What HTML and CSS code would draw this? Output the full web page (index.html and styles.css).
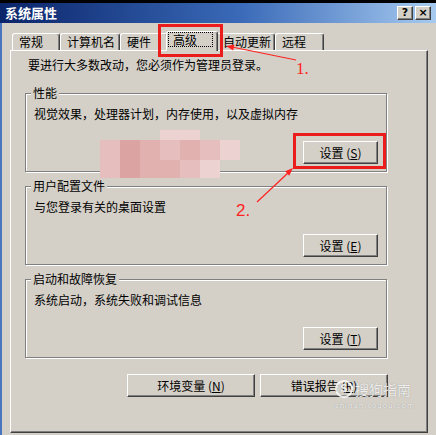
FILE: index.html
```html
<!DOCTYPE html>
<html lang="zh-CN">
  <head>
    <meta charset="UTF-8" />
    <meta name="viewport" content="width=device-width, initial-scale=1.0" />
    <title>系统属性</title>
    <link rel="stylesheet" href="styles.css">
  </head>
  <body>
    <div class="window">
      <div class="titlebar">
        <span class="title">系统属性</span>
        <div class="title-buttons">
          <span class="title-btn">?</span>
          <span class="title-btn">×</span>
        </div>
      </div>

      <div class="client">
        <div class="tabs">
          <div class="tab w-48">常规</div>
          <div class="tab w-60">计算机名</div>
          <div class="tab w-48">硬件</div>
          <div class="tab tab-active"><span class="focus">高级</span></div>
          <div class="tab w-59">自动更新</div>
          <div class="tab w-49">远程</div>
        </div>

        <div class="panel">
          <p class="note">要进行大多数改动，您必须作为管理员登录。</p>

          <div class="group">
            <span class="group-title">性能</span>
            <p class="group-text">视觉效果，处理器计划，内存使用，以及虚拟内存</p>
            <button class="btn">设置 (<u>S</u>)</button>
          </div>

          <div class="group">
            <span class="group-title">用户配置文件</span>
            <p class="group-text">与您登录有关的桌面设置</p>
            <button class="btn">设置 (<u>E</u>)</button>
          </div>

          <div class="group">
            <span class="group-title">启动和故障恢复</span>
            <p class="group-text">系统启动，系统失败和调试信息</p>
            <button class="btn">设置 (<u>T</u>)</button>
          </div>

          <div class="actions">
            <button class="btn btn-wide">环境变量 (<u>N</u>)</button>
            <button class="btn btn-wide">错误报告 (<u>R</u>)</button>
          </div>
        </div>
      </div>
    </div>

    <!-- annotations drawn over the screenshot -->
    <div class="blur">
      <i></i><i></i><i></i><i class="c1"></i><i class="c1"></i><i></i><i></i>
      <i class="c2"></i><i class="c4"></i><i class="c3"></i><i class="c2"></i><i class="c3"></i><i class="c2"></i><i class="c1"></i>
      <i class="c2"></i><i class="c4"></i><i class="c3"></i><i class="c3"></i><i class="c2"></i><i class="c1"></i><i></i>
    </div>

    <div class="mark mark-tab"></div>
    <div class="mark mark-btn"></div>
    <span class="step step-1">1.</span>
    <span class="step step-2">2.</span>

    <svg class="arrows" width="436" height="435" viewBox="0 0 436 435">
      <line x1="296" y1="60" x2="232" y2="47" stroke="#f22" stroke-width="1.2" />
      <polygon points="226,46 234.4,44.6 233.2,50.5" fill="#f22" />
      <line x1="257" y1="202" x2="288" y2="173" stroke="#f22" stroke-width="1.2" />
      <polygon points="293,168 289.2,175.7 285.1,171.3" fill="#f22" />
    </svg>

    <div class="watermark">
      <div class="wm-name"><span class="wm-logo">S</span>搜狗指南</div>
      <div class="wm-url">zhinan.sogou.com</div>
    </div>
  </body>
</html>
```

FILE: styles.css
```css
body {
  margin: 0;
  width: 436px;
  height: 435px;
  overflow: hidden;
  position: relative;
  background-color: #000;
  font-family: "Noto Sans CJK SC", "Liberation Sans", sans-serif;
  font-size: 12px;
  color: #000;
}

.window {
  margin-top: 3px;
  height: 432px;
  background-color: #d4d0c8;
}

/* title bar */
.titlebar {
  height: 20px;
  display: flex;
  align-items: center;
  justify-content: space-between;
  padding: 0 5px;
  background: linear-gradient(to right, #0a246a, #3a6ab8 55%, #a6caf0);
}
.title {
  color: #fff;
  font-weight: bold;
  font-size: 13px;
  line-height: 14px;
}
.title-buttons {
  display: flex;
  gap: 2px;
}
.title-btn {
  width: 16px;
  height: 14px;
  box-sizing: border-box;
  background-color: #d4d0c8;
  border: 1px solid;
  border-color: #fff #404040 #404040 #fff;
  box-shadow: inset -1px -1px #808080;
  font-family: "DejaVu Sans", sans-serif;
  font-weight: bold;
  font-size: 11px;
  line-height: 12px;
  text-align: center;
}

/* client area */
.client {
  border-left: 2px solid #4a76c0;
  padding: 8px 0 0 8px;
  height: 404px;
}

.tabs {
  display: flex;
  align-items: flex-end;
  height: 19px;
  padding-left: 2px;
}
.tab {
  box-sizing: border-box;
  height: 17px;
  padding-left: 6px;
  line-height: 15px;
  background-color: #d4d0c8;
  border-top: 1px solid #fff;
  border-left: 1px solid #fff;
  border-right: 1px solid #404040;
  box-shadow: inset -1px 0 #808080;
  border-radius: 3px 3px 0 0;
  white-space: nowrap;
}
.w-48 { width: 48px; }
.w-49 { width: 49px; }
.w-59 { width: 59px; }
.w-60 { width: 60px; }

.tab-active {
  position: relative;
  z-index: 1;
  width: 52px;
  height: 20px;
  margin: 0 -2px -1px;
  padding: 0 4px 0 1px;
}
.focus {
  display: block;
  height: 15px;
  box-sizing: border-box;
  border: 1px dotted #000;
  padding-left: 4px;
  line-height: 13px;
}

.panel {
  box-sizing: border-box;
  width: 418px;
  height: 383px;
  padding: 0 0 0 14px;
  border: 1px solid;
  border-color: #fff #404040 #404040 #fff;
  box-shadow: inset -1px -1px #808080;
}

.note {
  margin: 8px 0 0 3px;
  line-height: 12px;
}

/* group boxes */
.group {
  box-sizing: border-box;
  width: 362px;
  height: 79px;
  margin-top: 22px;
  display: flex;
  flex-direction: column;
  padding: 0 8px 7px;
  border: 1px solid #808080;
  box-shadow: inset 1px 1px #fff, 1px 1px #fff;
}
.group + .group {
  margin-top: 14px;
}
.group-title {
  align-self: flex-start;
  margin: -8px 0 0 -3px;
  padding: 0 2px;
  line-height: 14px;
  background-color: #d4d0c8;
}
.group-text {
  margin: 7px 0 0;
  line-height: 14px;
}

.btn {
  box-sizing: border-box;
  width: 75px;
  height: 23px;
  padding: 0;
  background-color: #d4d0c8;
  border: 1px solid;
  border-color: #fff #404040 #404040 #fff;
  box-shadow: inset -1px -1px #808080;
  font-family: inherit;
  font-size: 12px;
  color: #000;
}
.group .btn {
  margin-top: auto;
  align-self: flex-end;
}
.btn-wide {
  width: 128px;
}

.actions {
  width: 363px;
  margin-top: 16px;
  display: flex;
  justify-content: flex-end;
  gap: 5px;
}

/* red annotation marks */
.mark {
  position: absolute;
  box-sizing: border-box;
  border: 3px solid #ec1c1c;
}
.mark-tab {
  left: 158px;
  top: 24px;
  width: 65px;
  height: 33px;
}
.mark-btn {
  left: 293px;
  top: 133px;
  width: 93px;
  height: 36px;
}
.step {
  position: absolute;
  color: #f22;
  font-size: 17px;
  line-height: 17px;
}
.step-1 {
  left: 296px;
  top: 60px;
  font-family: "Liberation Serif", serif;
}
.step-2 {
  left: 236px;
  top: 202px;
  font-family: "Liberation Sans", sans-serif;
}
.arrows {
  position: absolute;
  left: 0;
  top: 0;
  pointer-events: none;
}

/* pixelated smear */
.blur {
  position: absolute;
  left: 100px;
  top: 130px;
  display: grid;
  grid-template-columns: repeat(7, 20px);
  grid-template-rows: 10px 20px 18px;
}
.blur .c1 { background-color: #ecd2d1; }
.blur .c2 { background-color: #e6bebd; }
.blur .c3 { background-color: #e1b1b0; }
.blur .c4 { background-color: #dba4a3; }

/* watermark */
.watermark {
  position: absolute;
  left: 335px;
  top: 380px;
  color: rgba(255, 255, 255, 0.85);
  text-shadow: 0 0 1px rgba(90, 90, 90, 0.6);
}
.wm-name {
  display: flex;
  align-items: center;
  gap: 2px;
  font-size: 14px;
  line-height: 17px;
}
.wm-logo {
  width: 14px;
  height: 14px;
  border: 2px solid rgba(255, 255, 255, 0.85);
  border-radius: 50%;
  font-family: "DejaVu Sans", sans-serif;
  font-weight: bold;
  font-size: 11px;
  line-height: 14px;
  text-align: center;
}
.wm-url {
  margin-top: 4px;
  font-family: "DejaVu Sans", sans-serif;
  font-size: 7px;
  letter-spacing: 1px;
}
```
